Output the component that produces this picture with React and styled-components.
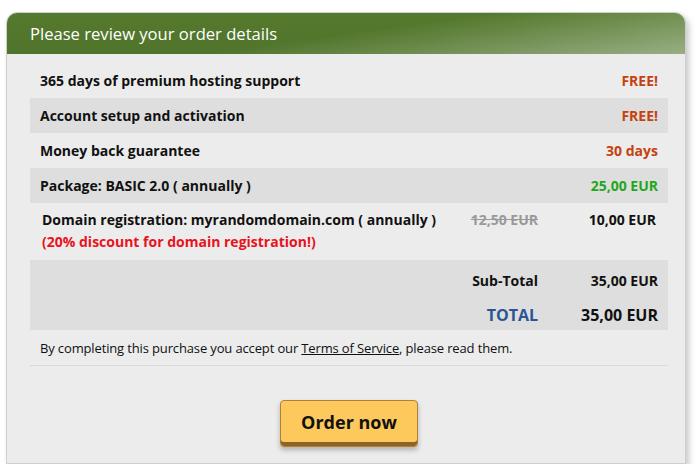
import React from 'react'
import styled, { createGlobalStyle } from 'styled-components'

const Global = createGlobalStyle`
  body {
    margin: 0;
    background: #fff;
    font-family: "Open Sans", "Noto Sans", sans-serif;
  }
`

const Page = styled.div`
  padding: 12px 0 0 6px;
`

const Panel = styled.div`
  width: 678px;
  border: 1px solid #cfcfcf;
  border-radius: 11px 11px 0 0;
  background: #ececec;
  box-shadow: 3px 4px 6px rgba(0, 0, 0, 0.22);
`

const Header = styled.div`
  height: 41px;
  display: flex;
  align-items: center;
  padding-left: 23px;
  border-radius: 10px 10px 0 0;
  background:
    linear-gradient(172deg, rgba(255,255,255,0) 50%, rgba(255,255,255,0.42) 100%),
    linear-gradient(180deg, #557a2d 0%, #4f742b 100%);
  color: #fff;
  font-size: 16.6px;
`

const Body = styled.div`
  padding: 9px 17px 0 23px;
`

const Table = styled.div`
  display: flex;
  flex-direction: column;
`

const Row = styled.div`
  display: grid;
  grid-template-columns: 1fr 118px;
  align-items: center;
  height: 35px;
  padding: 0 10px;
  background: ${p => (p.$shade ? '#dedede' : 'transparent')};
  font-weight: 700;
  font-size: 14px;
  color: #111;
`

const Value = styled.span`
  text-align: right;
  color: ${p => p.$color || '#111'};
`

const DomainRow = styled.div`
  display: grid;
  grid-template-columns: 1fr 100px 118px;
  align-items: start;
  height: 57px;
  padding: 6px 12px 0 12px;
  box-sizing: border-box;
  font-weight: 700;
  font-size: 14px;
  color: #111;
  line-height: 22px;
`

const Note = styled.div`
  color: #e8131d;
`

const OldPrice = styled.span`
  text-align: right;
  color: #999;
  text-decoration: line-through;
`

const Totals = styled.div`
  background: #dedede;
  padding: 8px 10px 0;
  display: flex;
  flex-direction: column;
`

const TotalLine = styled.div`
  display: grid;
  grid-template-columns: 1fr 120px;
  align-items: center;
  box-sizing: border-box;
  height: ${p => (p.$big ? '38px' : '24px')};
  padding-top: ${p => (p.$big ? '8px' : '0')};
  font-weight: 700;
  font-size: ${p => (p.$big ? '16px' : '14px')};
  color: #111;

  .label {
    text-align: right;
    color: ${p => (p.$big ? '#2a5594' : '#111')};
  }
  .amount {
    text-align: right;
  }
`

const Terms = styled.div`
  padding: 9px 10px 8px;
  border-bottom: 1px solid #d9d9d9;
  font-size: 13px;
  color: #111;
  letter-spacing: -0.14px;

  a {
    color: #111;
    text-decoration: underline;
  }
`

const Footer = styled.div`
  display: flex;
  justify-content: center;
  padding: 34px 0 16px;
`

const OrderButton = styled.button`
  width: 138px;
  height: 47px;
  padding-bottom: 4px;
  border: 1px solid #b08238;
  border-radius: 4px;
  background: #fdc95c;
  box-shadow: inset 0 -4px 0 #8c6428, 0 3px 5px rgba(0, 0, 0, 0.25);
  font-family: "Open Sans", sans-serif;
  font-weight: 700;
  font-size: 18px;
  color: #111;
  cursor: pointer;
`

export default function App() {
  return (
    <Page>
      <Global />
      <Panel>
        <Header>Please review your order details</Header>
        <Body>
          <Table>
            <Row>
              <span>365 days of premium hosting support</span>
              <Value $color="#c4420f">FREE!</Value>
            </Row>
            <Row $shade>
              <span>Account setup and activation</span>
              <Value $color="#c4420f">FREE!</Value>
            </Row>
            <Row>
              <span>Money back guarantee</span>
              <Value $color="#c4420f">30 days</Value>
            </Row>
            <Row $shade>
              <span>Package: BASIC 2.0 ( annually )</span>
              <Value $color="#1ea81c">25,00 EUR</Value>
            </Row>
            <DomainRow>
              <div>
                <div>Domain registration: myrandomdomain.com ( annually )</div>
                <Note>(20% discount for domain registration!)</Note>
              </div>
              <OldPrice>12,50 EUR</OldPrice>
              <Value>10,00 EUR</Value>
            </DomainRow>
            <Totals>
              <TotalLine>
                <span className="label">Sub-Total</span>
                <span className="amount">35,00 EUR</span>
              </TotalLine>
              <TotalLine $big>
                <span className="label">TOTAL</span>
                <span className="amount">35,00 EUR</span>
              </TotalLine>
            </Totals>
          </Table>
          <Terms>
            By completing this purchase you accept our <a href="#">Terms of Service</a>, please read them.
          </Terms>
          <Footer>
            <OrderButton>Order now</OrderButton>
          </Footer>
        </Body>
      </Panel>
    </Page>
  )
}
